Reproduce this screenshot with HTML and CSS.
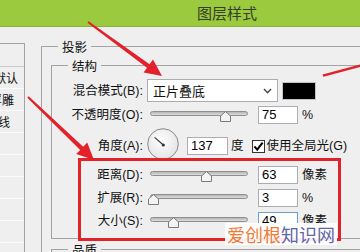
FILE: index.html
```html
<!DOCTYPE html>
<html lang="zh-CN">
<head>
<meta charset="utf-8">
<title>图层样式</title>
<link rel="stylesheet" href="styles.css">
</head>
<body>
<div class="page">
  <header class="titlebar"><span class="title">图层样式</span></header>
  <div class="main">
    <aside class="sidebar">
      <div class="item item-top"></div>
      <div class="item"><span class="pad-6">混合选项:默认</span></div>
      <div class="item"><span class="pad-10">斜面和浮雕</span></div>
      <div class="item"><span class="pad-14">等高线</span></div>
      <div class="item"></div>
      <div class="item"></div>
      <div class="item"></div>
      <div class="item"></div>
      <div class="item"></div>
    </aside>
    <fieldset class="group outer">
      <legend>投影</legend>
      <fieldset class="group inner">
        <legend>结构</legend>
        <div class="row row-blend">
          <span class="label">混合模式(B):</span>
          <div class="select"><span>正片叠底</span><svg class="chevron" width="9" height="6" viewBox="0 0 9 6"><polyline points="1,1 4.5,4.8 8,1" fill="none" stroke="#444" stroke-width="1.4"/></svg></div>
          <span class="swatch"></span>
        </div>
        <div class="row row-opacity">
          <span class="label">不透明度(O):</span>
          <div class="slider"><span class="track"></span><svg class="thumb" style="left:70px" width="11" height="11" viewBox="0 0 11 11"><path d="M5.5 0.6 L10.5 5 L10.5 10.5 L0.5 10.5 L0.5 5 Z" fill="#f3f3f3" stroke="#7b7b7b"/></svg></div>
          <span class="input">75</span>
          <span class="unit">%</span>
        </div>
        <div class="row row-angle">
          <span class="label">角度(A):</span>
          <svg class="dial" width="32" height="32" viewBox="0 0 32 32">
            <defs><radialGradient id="dg" cx="0.45" cy="0.4" r="0.6"><stop offset="0" stop-color="#ffffff"/><stop offset="1" stop-color="#e4e4e4"/></radialGradient></defs>
            <circle cx="16" cy="16" r="15.3" fill="url(#dg)" stroke="#8a8a8a" stroke-width="1"/>
            <line x1="16.3" y1="17" x2="7.6" y2="9.4" stroke="#333" stroke-width="1.1"/>
            <circle cx="16.3" cy="17" r="1.6" fill="#333"/>
          </svg>
          <span class="input input-angle">137</span>
          <span class="unit unit-deg">度</span>
          <svg class="check" width="13" height="13" viewBox="0 0 13 13"><rect x="0.5" y="0.5" width="12" height="12" fill="#fff" stroke="#333"/><polyline points="2.4,6.4 5.2,9.6 10.6,2.6" fill="none" stroke="#000" stroke-width="2"/></svg>
          <span class="check-label">使用全局光(G)</span>
        </div>
        <div class="row row-distance">
          <span class="label">距离(D):</span>
          <div class="slider"><span class="track"></span><svg class="thumb" style="left:51px" width="11" height="11" viewBox="0 0 11 11"><path d="M5.5 0.6 L10.5 5 L10.5 10.5 L0.5 10.5 L0.5 5 Z" fill="#f3f3f3" stroke="#7b7b7b"/></svg></div>
          <span class="input">63</span>
          <span class="unit">像素</span>
        </div>
        <div class="row row-spread">
          <span class="label">扩展(R):</span>
          <div class="slider"><span class="track"></span><svg class="thumb" style="left:-2px" width="11" height="11" viewBox="0 0 11 11"><path d="M5.5 0.6 L10.5 5 L10.5 10.5 L0.5 10.5 L0.5 5 Z" fill="#f3f3f3" stroke="#7b7b7b"/></svg></div>
          <span class="input">3</span>
          <span class="unit">%</span>
        </div>
        <div class="row row-size">
          <span class="label">大小(S):</span>
          <div class="slider"><span class="track"></span><svg class="thumb" style="left:18px" width="11" height="11" viewBox="0 0 11 11"><path d="M5.5 0.6 L10.5 5 L10.5 10.5 L0.5 10.5 L0.5 5 Z" fill="#f3f3f3" stroke="#7b7b7b"/></svg></div>
          <span class="input input-focus">49</span>
          <span class="unit">像素</span>
        </div>
      </fieldset>
      <fieldset class="group inner quality"><legend>品质</legend></fieldset>
    </fieldset>
  </div>

  <div class="highlight"></div>

  <svg class="arrows" width="360" height="252" viewBox="0 0 360 252">
    <polygon fill="#e3212b" points="88.6,21.2 149.6,64.2 153,59.5 162,76 143.6,72.5 147,67.8 87.4,22.8"/>
    <polygon fill="#e3212b" points="28.7,96.3 83.2,146.7 87.2,142.5 94,160 76.2,154.1 80.2,149.9 27.3,97.7"/>
    <polygon fill="#e3212b" points="322.5,74.4 361,64.3 361,66.8 323.5,76.8"/>
  </svg>

  <div class="watermark"><span class="wm-a">爱创根</span><span class="wm-b">知识网</span></div>
</div>
</body>
</html>
```

FILE: styles.css
```css
* { box-sizing: border-box; }

html, body {
  margin: 0;
  padding: 0;
}

body {
  width: 360px;
  height: 252px;
  overflow: hidden;
  background: #efefef;
  font-family: "Liberation Sans", "Noto Sans CJK SC", sans-serif;
  font-size: 12.5px;
  color: #111;
}

.page {
  position: relative;
  width: 360px;
  height: 252px;
  overflow: hidden;
  background: #efefef;
}

/* title bar */
.titlebar {
  height: 27px;
  background: #9cca3f;
  border-bottom: 1px solid #88b534;
  display: flex;
  align-items: center;
  padding-left: 197px;
}

.title {
  font-family: "Noto Sans CJK SC", sans-serif;
  font-size: 15px;
  line-height: 18px;
  color: #34402a;
}

.main {
  display: flex;
  align-items: flex-start;
}

/* left list */
.sidebar {
  flex: none;
  width: 25px;
  height: 230px;
  margin-top: 16px;
  border-top: 1px solid #a3a3a3;
  border-right: 1px solid #a3a3a3;
  overflow: hidden;
}

.item {
  height: 22px;
  border-bottom: 1px solid #fbfbfb;
  display: flex;
  justify-content: flex-end;
  align-items: center;
  white-space: nowrap;
  font-family: "Noto Sans CJK SC", sans-serif;
  font-size: 12px;
  line-height: 16px;
}

.item-top {
  height: 23px;
  border-bottom-color: #c9c9c9;
}

.item span { flex: none; }
.pad-6 { padding-right: 6px; }
.pad-10 { padding-right: 10px; }
.pad-14 { padding-right: 14px; }

/* group boxes */
.group {
  margin: 0;
  padding: 0;
  min-width: 0;
  border: 1px solid #a3a3a3;
}

.group legend {
  margin-left: 16px;
  padding: 0 4px;
  height: 15px;
  line-height: 15px;
  font-family: "Noto Sans CJK SC", sans-serif;
  font-size: 12.5px;
  color: #111;
}

.outer {
  flex: none;
  width: 400px;
  margin: 12px 0 0 16px;
  padding-bottom: 20px;
}

.inner {
  margin: 4px 0 0 9px;
  padding: 6px 0 8px 0;
}

.quality {
  margin-top: 3px;
  height: 40px;
}

/* rows */
.row {
  display: flex;
  align-items: center;
  height: 18px;
  line-height: 18px;
  white-space: nowrap;
}

.label {
  flex: none;
  width: 91px;
  text-align: right;
}

.row-blend { height: 23px; }
.row-opacity { margin-top: 4px; }
.row-angle { margin-top: 4px; height: 32px; }
.row-distance { margin-top: 6px; }
.row-spread { margin-top: 5px; }
.row-size { margin-top: 5px; }

.row-angle > * { margin-top: 4px; }
.row-angle > .dial { margin-top: 0; }

.select {
  flex: none;
  width: 131px;
  height: 23px;
  margin-left: 4px;
  padding: 0 5px 0 5px;
  background: #fff;
  border: 1px solid #abadb3;
  display: flex;
  align-items: center;
  justify-content: space-between;
  font-family: "Noto Sans CJK SC", sans-serif;
  font-size: 13px;
}

.chevron { flex: none; }

.swatch {
  flex: none;
  width: 34px;
  height: 18px;
  margin-left: 4px;
  background: #000;
  border: 1px solid #c4c4c4;
}

.slider {
  flex: none;
  position: relative;
  width: 98px;
  height: 18px;
  margin-left: 7px;
}

.track {
  display: block;
  margin-top: 5px;
  height: 5px;
  border: 1px solid #8e8e8e;
  border-radius: 3px;
  background: linear-gradient(#b5b5b5, #dedede);
}

.thumb {
  position: absolute;
  top: 5px;
}

.input {
  flex: none;
  width: 40px;
  height: 18px;
  margin-left: 10px;
  padding-left: 3px;
  background: #fff;
  border: 1px solid #abadb3;
  line-height: 16px;
  font-size: 13px;
  color: #000;
}

.input-focus { border-color: #6f9fd6; }

.input-angle {
  width: 41px;
  margin-left: 8px;
}

.unit {
  flex: none;
  margin-left: 4px;
  font-size: 12.5px;
}

.unit-deg { margin-left: 3px; }

.dial {
  flex: none;
  margin-left: 4px;
}

.check {
  flex: none;
  margin-left: 8px;
}

.check-label {
  margin-left: 2px;
}

/* annotations drawn over the dialog */
.highlight {
  position: absolute;
  left: 78px;
  top: 158px;
  width: 263px;
  height: 83px;
  border: 3px solid #e0222b;
}

.arrows {
  position: absolute;
  left: 0;
  top: 0;
}

.watermark {
  position: absolute;
  left: 225px;
  top: 223px;
  padding: 0 2px;
  height: 22px;
  line-height: 22px;
  background: rgba(255, 255, 255, 0.93);
  font-family: "Noto Sans CJK SC", sans-serif;
  font-size: 18px;
  white-space: nowrap;
}

.wm-a { color: #ee7b37; }
.wm-b { color: #5f66aa; }
```
